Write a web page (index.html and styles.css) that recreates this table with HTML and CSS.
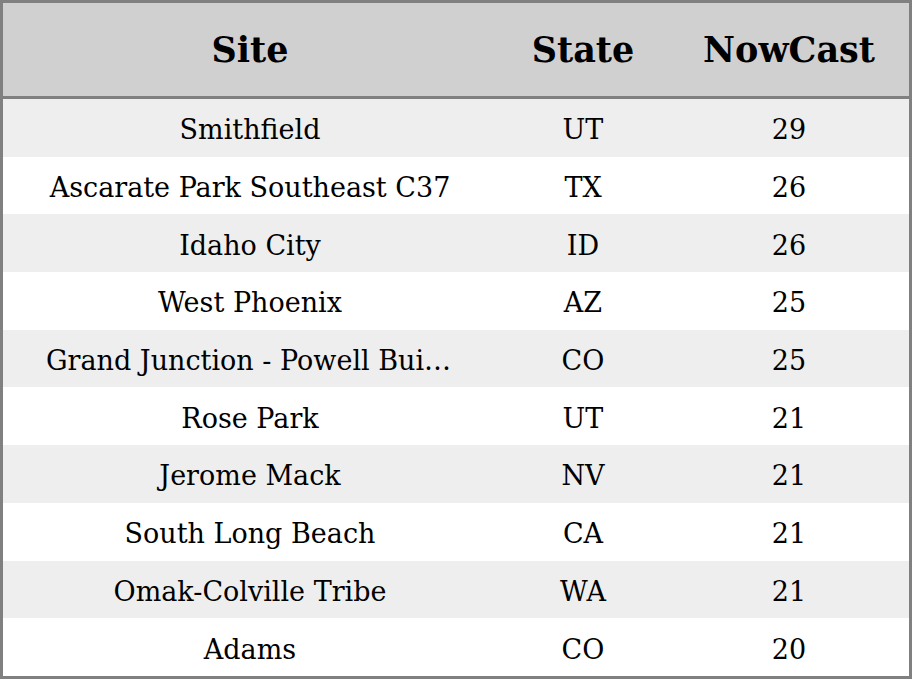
FILE: index.html
```html
<!DOCTYPE html>
<html>
<head>
<meta charset="utf-8">
<link rel="stylesheet" href="styles.css">
</head>
<body>
<table class="aq">
  <colgroup>
    <col class="c-site">
    <col class="c-state">
    <col class="c-now">
  </colgroup>
  <thead>
    <tr><th>Site</th><th>State</th><th>NowCast</th></tr>
  </thead>
  <tbody>
    <tr><td class="site">Smithfield</td><td>UT</td><td>29</td></tr>
    <tr><td class="site">Ascarate Park Southeast C37</td><td>TX</td><td>26</td></tr>
    <tr><td class="site">Idaho City</td><td>ID</td><td>26</td></tr>
    <tr><td class="site">West Phoenix</td><td>AZ</td><td>25</td></tr>
    <tr><td class="site">Grand Junction - Powell Building</td><td>CO</td><td>25</td></tr>
    <tr><td class="site">Rose Park</td><td>UT</td><td>21</td></tr>
    <tr><td class="site">Jerome Mack</td><td>NV</td><td>21</td></tr>
    <tr><td class="site">South Long Beach</td><td>CA</td><td>21</td></tr>
    <tr><td class="site">Omak-Colville Tribe</td><td>WA</td><td>21</td></tr>
    <tr><td class="site">Adams</td><td>CO</td><td>20</td></tr>
  </tbody>
</table>
</body>
</html>
```
FILE: styles.css
```css
html, body {
  margin: 0;
  padding: 0;
  background: #ffffff;
}
.aq {
  width: 912px;
  height: 679px;
  border-collapse: separate;
  border-spacing: 0;
  table-layout: fixed;
  border: 3px solid #808080;
  box-sizing: border-box;
  font-family: "DejaVu Serif", serif;
  color: #000;
}
.c-site { width: 494px; }
.c-state { width: 172px; }
.c-now { width: 240px; }
.aq th {
  height: 96px;
  background: #d0d0d0;
  border-bottom: 3px solid #808080;
  font-size: 35px;
  font-weight: bold;
  text-align: center;
  padding: 0;
  box-sizing: border-box;
}
.aq td {
  height: 57.6px;
  box-sizing: border-box;
  font-size: 27px;
  text-align: center;
  padding: 4px 0 0 0;
  white-space: nowrap;
}
.aq td.site {
  padding: 4px 43px 0 43px;
  overflow: hidden;
  text-overflow: ellipsis;
}
.aq tbody tr:nth-child(odd) td {
  background: #eeeeee;
}
.aq tbody tr:nth-child(even) td {
  background: #ffffff;
}
```
